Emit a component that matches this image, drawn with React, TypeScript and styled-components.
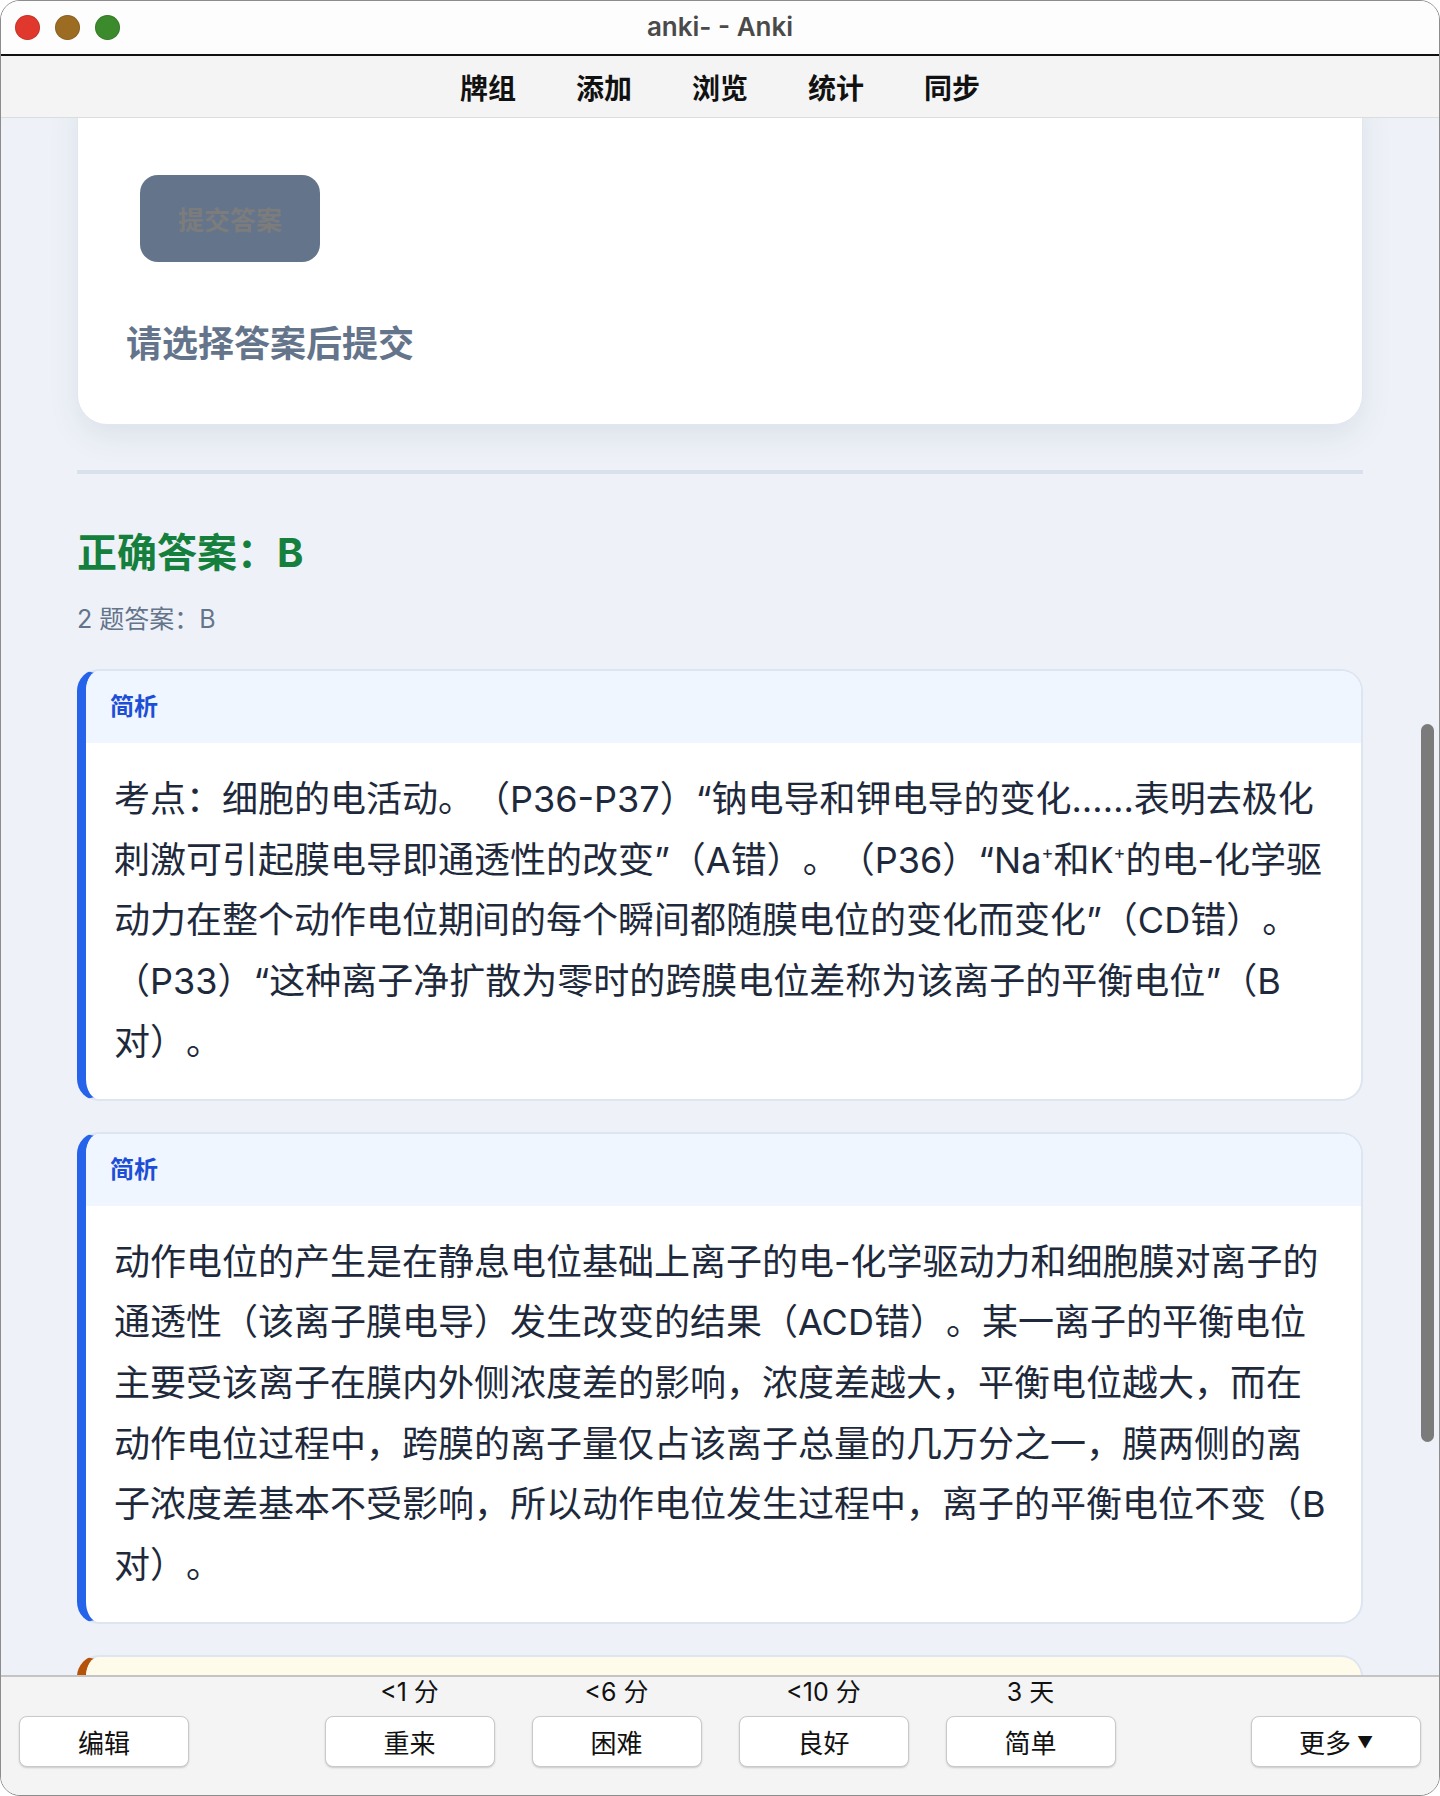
import React from 'react';
import styled, { createGlobalStyle } from 'styled-components';

const GlobalStyle = createGlobalStyle`
  html, body {
    margin: 0;
    padding: 0;
    background: #ffffff;
  }
  * {
    box-sizing: border-box;
  }
  body {
    font-family: 'Inter', 'Noto Sans CJK SC', sans-serif;
    text-spacing-trim: space-all;
  }
`;

const Window = styled.div`
  width: 1440px;
  height: 1796px;
  display: flex;
  flex-direction: column;
  border-radius: 20px;
  overflow: hidden;
  border: 1px solid #8c8c8c;
  background: #fdfdfd;
`;

const TitleBar = styled.header`
  height: 55px;
  flex: none;
  display: grid;
  grid-template-columns: 1fr auto 1fr;
  align-items: center;
  background: #fdfdfd;
  border-bottom: 2px solid #111111;
`;

const Lights = styled.div`
  display: flex;
  gap: 15px;
  padding-left: 14px;
`;

const Light = styled.span<{ color: string }>`
  width: 25px;
  height: 25px;
  border-radius: 50%;
  background: ${p => p.color};
  box-shadow: inset 0 0 0 1px rgba(0, 0, 0, 0.12);
`;

const WindowTitle = styled.div`
  font-size: 26px;
  font-weight: 600;
  color: #4a4a4a;
  margin-top: -3px;
`;

const Toolbar = styled.nav`
  height: 62px;
  flex: none;
  display: flex;
  justify-content: center;
  align-items: center;
  gap: 60px;
  background: #f4f4f4;
  border-bottom: 1px solid #dcdcdc;
`;

const NavItem = styled.span`
  font-size: 28px;
  font-weight: 700;
  color: #111111;
`;

const Main = styled.main`
  flex: 1;
  position: relative;
  overflow: hidden;
  background: #eef2f8;
`;

const Content = styled.div`
  width: 1286px;
  margin: 0 auto;
`;

const QuestionCard = styled.section`
  margin-top: -40px;
  padding: 96px 50px 55px;
  background: #ffffff;
  border: 1px solid #e1e7f0;
  border-radius: 30px;
  box-shadow: 0 12px 32px rgba(30, 41, 59, 0.08);
`;

const SubmitButton = styled.button`
  display: block;
  width: 180px;
  height: 87px;
  margin-left: 12px;
  border: none;
  border-radius: 18px;
  background: #64748b;
  color: #7c7c7c;
  font-family: inherit;
  font-size: 26px;
  font-weight: 700;
`;

const Hint = styled.p`
  margin: 57px 0 0 -2px;
  font-size: 36px;
  line-height: 50px;
  font-weight: 700;
  color: #64748b;
`;

const Divider = styled.hr`
  margin: 45px 0 0;
  height: 4px;
  border: none;
  background: #d9e1ec;
`;

const Correct = styled.h2`
  margin: 53px 0 0;
  font-size: 40px;
  line-height: 52px;
  font-weight: 700;
  color: #15803d;
`;

const SubAnswer = styled.p`
  margin: 22px 0 0;
  font-size: 25px;
  line-height: 36px;
  color: #64748b;
`;

type Tone = 'blue' | 'amber';

const NoteBox = styled.div<{ tone: Tone }>`
  margin-top: 32px;
  border: 2px solid #dde5f0;
  border-left: 9px solid ${p => (p.tone === 'amber' ? '#b45309' : '#2563eb')};
  border-radius: 22px;
  overflow: hidden;
  background: ${p => (p.tone === 'amber' ? '#fefbea' : '#ffffff')};
  & + & {
    margin-top: 31px;
  }
`;

const NoteHeader = styled.div<{ tone?: Tone }>`
  min-height: 72px;
  padding: 18px 24px;
  background: ${p => (p.tone === 'amber' ? '#fefbea' : '#eff6ff')};
  font-size: 24px;
  line-height: 36px;
  font-weight: 700;
  color: ${p => (p.tone === 'amber' ? '#b45309' : '#1d4ed8')};
`;

const NoteBody = styled.p`
  margin: 0;
  padding: 26px 28px 26px 28px;
  font-size: 36px;
  line-height: 60.7px;
  color: #1e293b;

  sup {
    font-size: 18px;
    line-height: 0;
    vertical-align: 14px;
  }
`;

const Scrollbar = styled.div`
  position: absolute;
  right: 5px;
  top: 606px;
  width: 13px;
  height: 718px;
  border-radius: 7px;
  background: #7b7b7c;
`;

const BottomBar = styled.footer`
  height: 120px;
  flex: none;
  display: grid;
  grid-template-columns: 170px 1fr auto 1fr 170px;
  align-items: end;
  padding: 0 18px 28px 18px;
  background: #f4f4f4;
  border-top: 2px solid #c4c4c4;
`;

const Answers = styled.div`
  grid-column: 3;
  display: flex;
  gap: 37px;
`;

const AnswerCol = styled.div`
  display: flex;
  flex-direction: column;
  align-items: center;
  gap: 9px;
`;

const Due = styled.span`
  font-size: 25px;
  line-height: 30px;
  color: #111111;
`;

const BarButton = styled.button<{ col?: number }>`
  grid-column: ${p => p.col ?? 'auto'};
  width: 170px;
  height: 51px;
  display: flex;
  align-items: center;
  justify-content: center;
  gap: 6px;
  background: #ffffff;
  border: 1px solid #c9c9c9;
  border-radius: 8px;
  box-shadow: 0 1px 2px rgba(0, 0, 0, 0.18);
  font-family: inherit;
  font-size: 26px;
  color: #111111;
`;

const Caret = styled.span`
  font-size: 16px;
`;

const answers = [
  { due: '<1 分', label: '重来' },
  { due: '<6 分', label: '困难' },
  { due: '<10 分', label: '良好' },
  { due: '3 天', label: '简单' },
];

const App: React.FC = () => {
  return (
    <>
      <GlobalStyle />
      <Window>
        <TitleBar>
          <Lights>
            <Light color="#e0382c" />
            <Light color="#9c6c22" />
            <Light color="#3b8a2b" />
          </Lights>
          <WindowTitle>anki- - Anki</WindowTitle>
          <div />
        </TitleBar>

        <Toolbar>
          <NavItem>牌组</NavItem>
          <NavItem>添加</NavItem>
          <NavItem>浏览</NavItem>
          <NavItem>统计</NavItem>
          <NavItem>同步</NavItem>
        </Toolbar>

        <Main>
          <Content>
            <QuestionCard>
              <SubmitButton disabled>提交答案</SubmitButton>
              <Hint>请选择答案后提交</Hint>
            </QuestionCard>

            <Divider />

            <Correct>正确答案：B</Correct>
            <SubAnswer>2 题答案：B</SubAnswer>

            <NoteBox tone="blue">
              <NoteHeader>简析</NoteHeader>
              <NoteBody>
                考点：细胞的电活动。（P36-P37）“钠电导和钾电导的变化……表明去极化刺激可引起膜电导即通透性的改变”（A错）。（P36）“Na<sup>+</sup>和K<sup>+</sup>的电-化学驱动力在整个动作电位期间的每个瞬间都随膜电位的变化而变化”（CD错）。（P33）“这种离子净扩散为零时的跨膜电位差称为该离子的平衡电位”（B对）。
              </NoteBody>
            </NoteBox>

            <NoteBox tone="blue">
              <NoteHeader>简析</NoteHeader>
              <NoteBody>
                动作电位的产生是在静息电位基础上离子的电-化学驱动力和细胞膜对离子的通透性（该离子膜电导）发生改变的结果（ACD错）。某一离子的平衡电位主要受该离子在膜内外侧浓度差的影响，浓度差越大，平衡电位越大，而在动作电位过程中，跨膜的离子量仅占该离子总量的几万分之一，膜两侧的离子浓度差基本不受影响，所以动作电位发生过程中，离子的平衡电位不变（B对）。
              </NoteBody>
            </NoteBox>

            <NoteBox tone="amber">
              <NoteHeader tone="amber" />
            </NoteBox>
          </Content>
          <Scrollbar />
        </Main>

        <BottomBar>
          <BarButton col={1}>编辑</BarButton>
          <Answers>
            {answers.map(a => (
              <AnswerCol key={a.label}>
                <Due>{a.due}</Due>
                <BarButton>{a.label}</BarButton>
              </AnswerCol>
            ))}
          </Answers>
          <BarButton col={5}>
            更多<Caret>▼</Caret>
          </BarButton>
        </BottomBar>
      </Window>
    </>
  );
};

export default App;
